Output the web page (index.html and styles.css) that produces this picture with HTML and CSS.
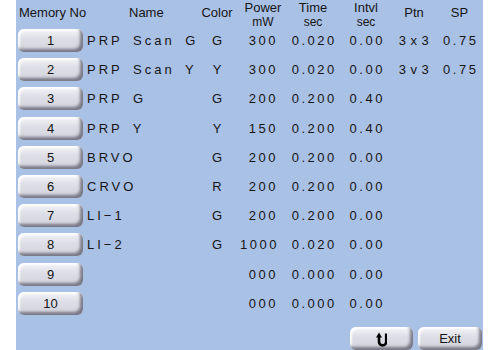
FILE: index.html
```html
<!DOCTYPE html>
<html lang="en">
<head>
    <meta charset="UTF-8">
    <title>Memory</title>
    <link rel="stylesheet" href="styles.css">
</head>
<body>

<section id="memory">

    <div class="memory_grid memory_head">
        <div class="memory_head-no">Memory No</div>
        <div class="memory_head-name">Name</div>
        <div>Color</div>
        <div class="memory_head-two">Power<span>mW</span></div>
        <div class="memory_head-two">Time<span>sec</span></div>
        <div class="memory_head-two">Intvl<span>sec</span></div>
        <div>Ptn</div>
        <div>SP</div>
    </div>

    <div class="memory_rows">
        <div class="memory_grid memory_row">
            <div class="memory_btn">1</div>
            <div class="memory_name">PRP Scan G</div>
            <div class="memory_c">G</div>
            <div class="memory_pw">300</div>
            <div class="memory_c">0.020</div>
            <div class="memory_c">0.00</div>
            <div class="memory_c memory_ptn">3 x 3</div>
            <div class="memory_c">0.75</div>
        </div>
        <div class="memory_grid memory_row">
            <div class="memory_btn">2</div>
            <div class="memory_name">PRP Scan Y</div>
            <div class="memory_c">Y</div>
            <div class="memory_pw">300</div>
            <div class="memory_c">0.020</div>
            <div class="memory_c">0.00</div>
            <div class="memory_c memory_ptn">3 v 3</div>
            <div class="memory_c">0.75</div>
        </div>
        <div class="memory_grid memory_row">
            <div class="memory_btn">3</div>
            <div class="memory_name">PRP G</div>
            <div class="memory_c">G</div>
            <div class="memory_pw">200</div>
            <div class="memory_c">0.200</div>
            <div class="memory_c">0.40</div>
            <div></div>
            <div></div>
        </div>
        <div class="memory_grid memory_row">
            <div class="memory_btn">4</div>
            <div class="memory_name">PRP Y</div>
            <div class="memory_c">Y</div>
            <div class="memory_pw">150</div>
            <div class="memory_c">0.200</div>
            <div class="memory_c">0.40</div>
            <div></div>
            <div></div>
        </div>
        <div class="memory_grid memory_row">
            <div class="memory_btn">5</div>
            <div class="memory_name">BRVO</div>
            <div class="memory_c">G</div>
            <div class="memory_pw">200</div>
            <div class="memory_c">0.200</div>
            <div class="memory_c">0.00</div>
            <div></div>
            <div></div>
        </div>
        <div class="memory_grid memory_row">
            <div class="memory_btn">6</div>
            <div class="memory_name">CRVO</div>
            <div class="memory_c">R</div>
            <div class="memory_pw">200</div>
            <div class="memory_c">0.200</div>
            <div class="memory_c">0.00</div>
            <div></div>
            <div></div>
        </div>
        <div class="memory_grid memory_row">
            <div class="memory_btn">7</div>
            <div class="memory_name">LI&minus;1</div>
            <div class="memory_c">G</div>
            <div class="memory_pw">200</div>
            <div class="memory_c">0.200</div>
            <div class="memory_c">0.00</div>
            <div></div>
            <div></div>
        </div>
        <div class="memory_grid memory_row">
            <div class="memory_btn">8</div>
            <div class="memory_name">LI&minus;2</div>
            <div class="memory_c">G</div>
            <div class="memory_pw">1000</div>
            <div class="memory_c">0.020</div>
            <div class="memory_c">0.00</div>
            <div></div>
            <div></div>
        </div>
        <div class="memory_grid memory_row">
            <div class="memory_btn">9</div>
            <div class="memory_name"></div>
            <div class="memory_c"></div>
            <div class="memory_pw">000</div>
            <div class="memory_c">0.000</div>
            <div class="memory_c">0.00</div>
            <div></div>
            <div></div>
        </div>
        <div class="memory_grid memory_row">
            <div class="memory_btn">10</div>
            <div class="memory_name"></div>
            <div class="memory_c"></div>
            <div class="memory_pw">000</div>
            <div class="memory_c">0.000</div>
            <div class="memory_c">0.00</div>
            <div></div>
            <div></div>
        </div>
    </div>

    <div class="memory_foot">
        <div class="memory_btn memory_btn-back">
            <svg width="11" height="15" viewBox="0 0 11 15">
                <path d="M3 4.5 V9.8 a3.6 3.6 0 0 0 7.2 0 V1.5" fill="none" stroke="#000" stroke-width="2.6"/>
                <polygon points="0,5.5 3,0.5 6,5.5" fill="#000"/>
            </svg>
        </div>
        <div class="memory_btn memory_btn-exit">Exit</div>
    </div>

</section>

</body>
</html>
```

FILE: styles.css
```css
body {
    margin: 0;
    background-color: #fff;
    font-family: "Liberation Sans", Arial, sans-serif;
    color: #151515;
}

#memory {
    margin-left: 16px;
    width: 467px;
    height: 350px;
    padding-left: 2px;
    box-sizing: border-box;
    background-color: #aac1e6;
    overflow: hidden;
}

.memory_grid {
    display: grid;
    grid-template-columns: 65px 111px 46px 46px 54px 52px 44px 47px;
    white-space: nowrap;
}

/* header */

.memory_head {
    height: 29px;
    font-size: 13px;
    align-items: start;
}

.memory_head div {
    text-align: center;
    line-height: 15px;
    padding-top: 5px;
}

.memory_head .memory_head-no {
    text-align: left;
    padding-left: 1px;
}

.memory_head .memory_head-name {
    text-align: left;
    padding-left: 46px;
}

.memory_head .memory_head-two {
    padding-top: 1px;
    line-height: 14px;
}

.memory_head-two span {
    display: block;
    font-size: 12px;
    line-height: 14px;
}

/* rows */

.memory_rows {
    display: flex;
    flex-direction: column;
    gap: 6.2px;
}

.memory_row {
    height: 23px;
    align-items: center;
    font-size: 13px;
    letter-spacing: 2.5px;
}

.memory_row .memory_c {
    text-align: center;
    padding-left: 2.5px;
}

.memory_row .memory_ptn {
    letter-spacing: .5px;
    padding-left: 0;
}

.memory_row .memory_name {
    padding-left: 4px;
    letter-spacing: 3px;
    word-spacing: 4px;
}

.memory_row .memory_pw {
    text-align: right;
    padding-right: 8px;
}

/* buttons */

.memory_btn {
    height: 23px;
    display: flex;
    align-items: center;
    justify-content: center;
    border-radius: 6px;
    font-size: 13px;
    letter-spacing: 0;
    background: linear-gradient(#f4f4f8, #dcdde5 45%, #d2d3dc);
    box-shadow: inset -3px -3px 3px rgba(60, 60, 75, .6), inset 2px 2px 2px rgba(255, 255, 255, .9);
}

.memory_foot {
    display: flex;
    justify-content: flex-end;
    gap: 5px;
    margin-top: 12.2px;
    padding-right: 1px;
}

.memory_btn-back {
    width: 63px;
}

.memory_btn-back svg {
    margin-top: 2px;
}

.memory_btn-exit {
    width: 64px;
}
```
